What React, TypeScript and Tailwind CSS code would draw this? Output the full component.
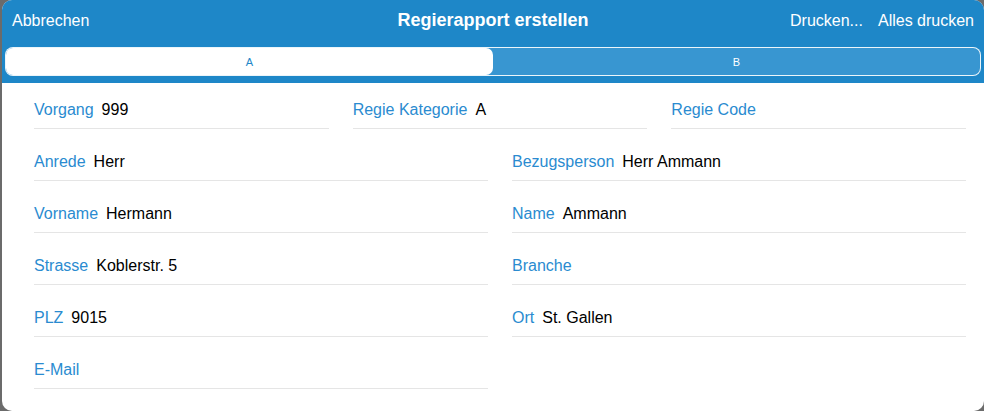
const Field = ({ label, value }: { label: string; value?: string }) => {
    return (
        <div className="flex items-end gap-2 h-[31px] pb-[8px] border-b border-[#e5e5e5]">
            <span className="text-[#2a8bd0] leading-5">{label}</span>
            {value && <span className="text-black leading-5">{value}</span>}
        </div>
    );
};

export default function App() {
    return (
        <div
            className="w-[984px] h-[411px] bg-[#6b6b6b] overflow-hidden"
            style={{ fontFamily: "'Liberation Sans', Arial, sans-serif" }}
        >
            <div className="ml-[2px] h-full bg-white rounded-[10px] overflow-hidden flex flex-col">
                <div className="bg-[#1e87c8] pb-[7px]">
                    <div className="h-10 flex items-center justify-between pt-[1px] pl-[10px] pr-[10px] relative text-white text-base">
                        <span>Abbrechen</span>
                        <span className="absolute left-0 right-0 text-center font-bold text-[18px] pointer-events-none">
                            Regierapport erstellen
                        </span>
                        <div className="flex gap-[15px]">
                            <span>Drucken...</span>
                            <span>Alles drucken</span>
                        </div>
                    </div>
                    <div className="mt-[7px] ml-[3px] mr-[3px] h-[29px] flex rounded-[8px] border border-white/90 bg-[#3896d1] text-[11px]">
                        <div className="w-1/2 flex items-center justify-center pt-[1px] bg-white rounded-[7px] text-[#1e87c8]">
                            A
                        </div>
                        <div className="w-1/2 flex items-center justify-center pt-[1px] text-white">B</div>
                    </div>
                </div>
                <div className="pt-[15px] pl-8 pr-[18px] flex flex-col gap-[21px] text-base">
                    <div className="grid grid-cols-3 gap-6">
                        <Field label="Vorgang" value="999" />
                        <Field label="Regie Kategorie" value="A" />
                        <Field label="Regie Code" />
                    </div>
                    <div className="grid grid-cols-2 gap-6">
                        <Field label="Anrede" value="Herr" />
                        <Field label="Bezugsperson" value="Herr Ammann" />
                    </div>
                    <div className="grid grid-cols-2 gap-6">
                        <Field label="Vorname" value="Hermann" />
                        <Field label="Name" value="Ammann" />
                    </div>
                    <div className="grid grid-cols-2 gap-6">
                        <Field label="Strasse" value="Koblerstr. 5" />
                        <Field label="Branche" />
                    </div>
                    <div className="grid grid-cols-2 gap-6">
                        <Field label="PLZ" value="9015" />
                        <Field label="Ort" value="St. Gallen" />
                    </div>
                    <div className="grid grid-cols-2 gap-6">
                        <Field label="E-Mail" />
                        <div />
                    </div>
                </div>
            </div>
        </div>
    );
}
